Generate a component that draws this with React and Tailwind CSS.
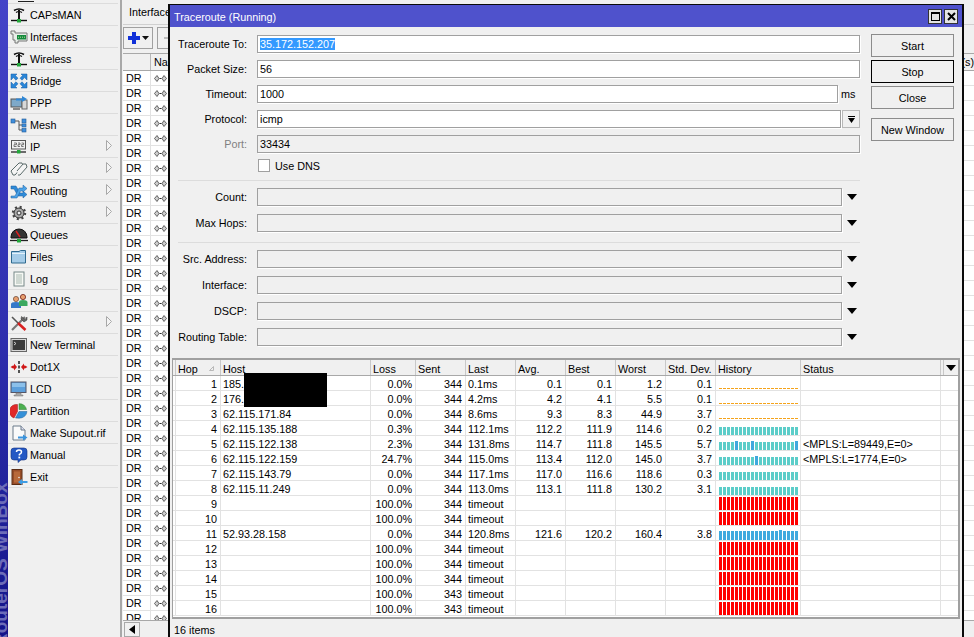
import React from "react";

const Base = ({ children, w = 18, h = 16 }) => (
  <svg width={w} height={h} viewBox="0 0 18 16" className="shrink-0">{children}</svg>
);

const Antenna = () => (
  <Base>
    <path d="M4 3.5Q9 .5 14 3.5" fill="none" stroke="#111" strokeWidth="1.6" />
    <path d="M6 5.5Q9 3.5 12 5.5" fill="none" stroke="#111" strokeWidth="1.2" />
    <path d="M9 3V13" stroke="#111" strokeWidth="2" />
    <path d="M1 13.5H17" stroke="#111" strokeWidth="1.4" />
    <rect x="7" y="12" width="4" height="3.5" fill="#22a83a" />
  </Base>
);
const Interfaces = () => (
  <Base>
    <path d="M1 2H5V4H17V12H8V14H5V11H3V5H1Z" fill="#e8eee8" stroke="#777" strokeWidth="1" />
    <rect x="7" y="6" width="9" height="4.5" fill="#168a3e" />
    <path d="M8 8.2H15" stroke="#b8e0a0" strokeWidth="1" strokeDasharray="1 1" />
  </Base>
);
const Bridge = () => (
  <Base>
    <g fill="#2a86d8" stroke="#185aa0" strokeWidth=".5">
      <path d="M1 1H7L5.4 2.6 8 5.2 6 7.2 3.4 4.6 1 7Z" />
      <path d="M17 1H11L12.6 2.6 10 5.2 12 7.2 14.6 4.6 17 7Z" />
      <path d="M1 15H7L5.4 13.4 8 10.8 6 8.8 3.4 11.4 1 9Z" />
      <path d="M17 15H11L12.6 13.4 10 10.8 12 8.8 14.6 11.4 17 9Z" />
    </g>
  </Base>
);
const Ppp = () => (
  <Base>
    <rect x="1" y="4" width="11" height="8" fill="#7ea9c9" stroke="#555" />
    <rect x="12" y="5" width="5" height="9" fill="#d8d8d8" stroke="#666" />
    <path d="M3 13H10V15H3Z" fill="#888" />
    <path d="M6 3.5H12V1L17 4 12 7V5.5H6Z" fill="#2f87d6" />
  </Base>
);
const Mesh = () => (
  <Base>
    <path d="M5 4H9V13H12M9 8H12" fill="none" stroke="#555" strokeWidth="1" />
    <rect x="1" y="2" width="4" height="4" fill="#3f8fdd" stroke="#245b95" strokeWidth=".6" />
    <rect x="12" y="2" width="4" height="4" fill="#3f8fdd" stroke="#245b95" strokeWidth=".6" />
    <rect x="12" y="7" width="4" height="3" fill="#3f8fdd" stroke="#245b95" strokeWidth=".6" />
    <rect x="12" y="11.5" width="4" height="3.5" fill="#3f8fdd" stroke="#245b95" strokeWidth=".6" />
  </Base>
);
const Ip = () => (
  <Base>
    <rect x="1.5" y="1.5" width="14" height="8.5" fill="#f2f2f2" stroke="#555" />
    <path d="M4 4H6.5V5.7H4V7.5H6.5M8 4H10V5.7H8V7.5H10M11.6 4H13.6V5.7H11.6V7.5H13.6" fill="none" stroke="#555" strokeWidth=".8" />
    <path d="M1 13H16" stroke="#222" strokeWidth="1.3" />
    <rect x="7" y="11" width="3.5" height="3.5" fill="#22a83a" />
  </Base>
);
const Mpls = () => (
  <Base>
    <path d="M1 10L9 2H12L13 5 5 14H3Z" fill="#f5f5f5" stroke="#5a6a6a" />
    <path d="M7 10L13 3H16L17 6 10 14H8" fill="#f5f5f5" stroke="#5a6a6a" />
  </Base>
);
const Routing = () => (
  <Base>
    <path d="M1 3H6L10 10H13V8L17 11.5 13 15V13H8L4 6H1Z" fill="#2e8ad8" stroke="#1c5c9c" strokeWidth=".5" />
    <path d="M1 13H5L9 5H13V2L17 5.5 13 9V8H10.5L7 15H1Z" fill="#4ba3e8" stroke="#1c5c9c" strokeWidth=".5" />
  </Base>
);
const Gear = () => (
  <Base>
    <circle cx="9" cy="8" r="5" fill="#aaa" stroke="#333" />
    <circle cx="9" cy="8" r="6" fill="none" stroke="#444" strokeWidth="2.4" strokeDasharray="2 2.7" />
    <circle cx="9" cy="8" r="2" fill="#f0f0f0" stroke="#333" />
  </Base>
);
const Queues = () => (
  <Base>
    <path d="M1 10A8 8 0 0 1 17 10V11H1Z" fill="#333" stroke="#111" />
    <path d="M6 4L10 10" stroke="#e02020" strokeWidth="1.4" />
    <path d="M0 13.5H18" stroke="#222" strokeWidth="1.3" />
    <rect x="7" y="12" width="4" height="3.5" fill="#22a83a" />
  </Base>
);
const Files = () => (
  <Base>
    <path d="M1.5 2.5H9L10.5 1.5H15.5V14H1.5Z" fill="#a5cce8" stroke="#2f6a8f" />
    <path d="M2 4.5H15" stroke="#e4f2fa" />
  </Base>
);
const Log = () => (
  <Base>
    <rect x="4" y="1" width="10" height="14" fill="#f6f8f4" stroke="#788" />
    <path d="M6 4H12M6 6H12M6 8H12M6 10H12M6 12H12" stroke="#a8b8b0" />
  </Base>
);
const Radius = () => (
  <Base>
    <circle cx="6" cy="6" r="2.6" fill="#e8a070" stroke="#503020" strokeWidth=".6" />
    <path d="M1 15V11Q1 9 6 9T11 11V15Z" fill="#3478c8" />
    <circle cx="13" cy="4" r="2.6" fill="#e8a070" stroke="#702018" strokeWidth=".8" />
    <path d="M9 13V9Q9 7 13 7T17.5 9V13Z" fill="#3aa860" />
  </Base>
);
const Tools = () => (
  <Base>
    <path d="M2 15L15 2" stroke="#777" strokeWidth="2.2" />
    <path d="M11.5 1.5L15 4.5 17 2 17 5 14 7 11 4Z" fill="#666" stroke="#333" strokeWidth=".5" />
    <path d="M2 2L8 8" stroke="#555" strokeWidth="1.6" />
    <path d="M8 8L15.5 15" stroke="#d82020" strokeWidth="2.6" />
  </Base>
);
const Terminal = () => (
  <Base>
    <rect x="1" y="1.5" width="15.5" height="13" fill="#d8d8d8" stroke="#666" />
    <rect x="2.5" y="3" width="12.5" height="10" fill="#3a3a3a" />
    <path d="M4 5L6 6.5 4 8" fill="none" stroke="#ddd" strokeWidth=".9" />
  </Base>
);
const Dot1x = () => (
  <Base>
    <path d="M9 2V5M9 6.5V9.5M9 11V14" stroke="#111" strokeWidth="1.4" />
    <path d="M7 8L4 4.5V6.5H3L0.5 8 3 9.5H4V11.5Z" fill="#d01818" />
    <path d="M11 8L14 4.5V6.5H15L17.5 8 15 9.5H14V11.5Z" fill="#d01818" />
  </Base>
);
const Lcd = () => (
  <Base>
    <rect x="1" y="1" width="15" height="10.5" fill="#5d9fdb" stroke="#556" />
    <path d="M2 2H15V6H2Z" fill="#8cc0ea" />
    <path d="M6 12H11V14H13V15H4V14H6Z" fill="#aaa" stroke="#777" strokeWidth=".5" />
  </Base>
);
const Partition = () => (
  <Base>
    <path d="M7.5 1.5A7 7 0 0 0 4 15L7.5 8.5Z" fill="#e02828" stroke="#981818" strokeWidth=".5" />
    <path d="M9 .7A7 7 0 0 1 16.5 6.5H9Z" fill="#4caf50" stroke="#2c7a30" strokeWidth=".5" />
    <path d="M9 8.5H17Q16 15 9 15.2 7 15 5.5 15Z" fill="#3490d8" stroke="#1f6098" strokeWidth=".5" />
  </Base>
);
const Supout = () => (
  <Base>
    <path d="M3 1H11L15 5V15H3Z" fill="#fafafa" stroke="#6a7a8a" />
    <path d="M11 1V5H15" fill="#dde" stroke="#6a7a8a" />
    <path d="M8 11.5H13V9.5L17.5 12.5 13 15.5V13.5H8Z" fill="#3a93dc" />
  </Base>
);
const Manual = () => (
  <Base>
    <path d="M4 1H14Q17 1 17 4V10Q17 13 14 13H11L8 15.5V13H4Q1 13 1 10V4Q1 1 4 1Z" fill="#2458c4" stroke="#123080" strokeWidth=".6" />
    <path d="M6.5 5Q6.5 3 9 3T11.5 5Q11.5 6.4 9.4 7.4V8.6" fill="none" stroke="#fff" strokeWidth="1.5" />
    <rect x="8.4" y="9.6" width="1.8" height="1.8" fill="#fff" />
  </Base>
);
const Exit = () => (
  <Base>
    <rect x="2" y="0.5" width="10" height="15" fill="#a0522d" stroke="#5a2c14" />
    <rect x="3.6" y="2" width="6.8" height="12" fill="#b8693a" stroke="#8a4522" strokeWidth=".6" />
    <circle cx="9" cy="8.5" r=".8" fill="#eee" />
    <path d="M17.5 12H12V10L8 13 12 16V14H17.5Z" fill="#3d9ce4" />
  </Base>
);

const menu = [
  ["CAPsMAN", Antenna], ["Interfaces", Interfaces], ["Wireless", Antenna], ["Bridge", Bridge],
  ["PPP", Ppp], ["Mesh", Mesh], ["IP", Ip, true], ["MPLS", Mpls, true], ["Routing", Routing, true],
  ["System", Gear, true], ["Queues", Queues], ["Files", Files], ["Log", Log], ["RADIUS", Radius],
  ["Tools", Tools, true], ["New Terminal", Terminal], ["Dot1X", Dot1x], ["LCD", Lcd],
  ["Partition", Partition], ["Make Supout.rif", Supout], ["Manual", Manual], ["Exit", Exit],
];

const Chevron = () => (
  <svg width="6" height="11" viewBox="0 0 6 11" className="absolute left-[98px] top-[4px]">
    <path d="M.5 .5L5.500 5.500 .5 10.500Z" fill="#f4f4f4" stroke="#a8a8a8" />
  </svg>
);

const Sidebar = () => (
  <div className="relative w-[8px] shrink-0 overflow-hidden bg-gradient-to-b from-[#4444c8] via-[#3030b0] to-[#14148a]">
    <span className="absolute left-[-9px] top-[647px] origin-top-left -rotate-90 whitespace-nowrap text-[19px] font-bold leading-[19px] text-[#6c6cb8]">
      RouterOS WinBox
    </span>
  </div>
);

const Menu = () => (
  <div className="w-[110px] shrink-0">
    <div className="h-[3px] overflow-hidden">
      <div className="ml-[10px] mt-[1px] h-[1px] w-[16px] bg-[#222]" />
    </div>
    <div className="border-t border-[#dcdcdc]">
      {menu.map(([label, Icon, sub]) => (
        <div key={label} className="relative flex h-[22px] items-center gap-[2px] border-b border-[#dcdcdc] pl-[2px]">
          <Icon />
          <span className="whitespace-nowrap pt-[2px]">{label}</span>
          {sub && <Chevron />}
        </div>
      ))}
    </div>
  </div>
);

const NameGlyph = () => (
  <svg width="13" height="7" viewBox="0 0 13 7" className="shrink-0">
    <path d="M3 .5L.5 3.500 3 6.500 5 3.500ZM10 .5L12.500 3.500 10 6.500 8 3.500Z" fill="#cfcfcf" stroke="#444" strokeWidth=".8" />
    <path d="M5.500 3.500H7.500" stroke="#333" />
  </svg>
);

const BackgroundList = () => {
  const rows = Array.from({ length: 37 });
  return (
    <div className="flex min-w-0 flex-1 flex-col border-l-2 border-[#a8a8a8] pl-[1px]">
      <div className="flex h-[25px] shrink-0 items-start border-b border-[#d0d0d0]">
        <span className="ml-[6px] mt-[7px] whitespace-nowrap">Interface</span>
      </div>
      <div className="flex h-[28px] shrink-0 items-start gap-[4px] pt-[2px]">
        <div className="flex h-[22px] w-[30px] items-center justify-center gap-[2px] border border-[#a0a0a0]">
          <svg width="12" height="12" viewBox="0 0 12 12"><path d="M4 0H8V4H12V8H8V12H4V8H0V4H4Z" fill="#1030d8" /></svg>
          <svg width="7" height="4" viewBox="0 0 7 4"><path d="M0 0H7L3.500 4Z" fill="#111" /></svg>
        </div>
        <div className="flex h-[22px] w-[20px] items-center justify-center border border-[#a0a0a0]">
          <div className="h-[2px] w-[6px] bg-[#bbb]" />
        </div>
      </div>
      <div className="flex h-[18px] shrink-0 border-y border-[#a8a8a8] leading-[17px]">
        <div className="w-[28px] border-r border-[#b8b8b8]" />
        <div className="pl-[3px]">Name</div>
        <div className="flex-1 overflow-hidden whitespace-nowrap text-right">(s)</div>
      </div>
      <div className="min-h-0 flex-1 overflow-hidden bg-white">
        {rows.map((_, i) => (
          <div key={i} className="flex h-[15px] border-b border-[#e2e2e2]">
            <div className="w-[28px] border-r border-[#e2e2e2] pl-[3px] leading-[15px]">DR</div>
            <div className="flex items-center pl-[3px]"><NameGlyph /></div>
          </div>
        ))}
      </div>
      <div className="flex h-[17px] shrink-0 border-t border-[#a8a8a8] p-[1px]">
        <div className="flex h-[15px] w-[16px] items-center justify-center border border-[#a8a8a8]">
          <svg width="6" height="9" viewBox="0 0 6 9"><path d="M6 0V9L0 4.500Z" fill="#000" /></svg>
        </div>
      </div>
    </div>
  );
};

const Field = ({ label, value, selected, disabled, dim, after }) => (
  <div className="flex h-[18px] items-center">
    <div className={`w-[77px] whitespace-nowrap text-right ${dim ? "text-[#808080]" : ""}`}>{label}</div>
    <div className={`ml-[10px] flex h-[18px] flex-1 items-center overflow-hidden border border-[#a0a0a0] pl-[2px] shadow-[1px_1px_0_#fff] ${disabled ? "bg-[#f0f0f0]" : "bg-white"}`}>
      {selected ? <span className="bg-[#3399ff] py-[1px] text-white">{value}</span> : value}
    </div>
    {after}
  </div>
);

const DropArrow = () => (
  <div className="flex w-[18px] shrink-0 justify-center pl-[1px]">
    <svg width="10" height="6" viewBox="0 0 10 6"><path d="M0 0H10L5 6Z" fill="#000" /></svg>
  </div>
);

const Button = ({ children, active, className = "" }) => (
  <div className={`flex h-[23px] w-[83px] items-center justify-center border pt-[1px] ${active ? "border-black" : "border-[#8c8c8c]"} ${className}`}>
    {children}
  </div>
);

const Divider = ({ className }) => <div className={`ml-[8px] h-[1px] bg-[#dcdcdc] ${className}`} />;

const Form = () => (
  <div className="flex pr-[8px]">
    <div className="w-[690px] shrink-0 pt-[8px]">
      <Field label="Traceroute To:" value="35.172.152.207" selected />
      <div className="mt-[7px]"><Field label="Packet Size:" value="56" /></div>
      <div className="mt-[7px]">
        <Field label="Timeout:" value="1000" after={<span className="w-[22px] shrink-0 pl-[3px]">ms</span>} />
      </div>
      <div className="mt-[7px]">
        <Field label="Protocol:" value="icmp" after={
          <div className="ml-[1px] flex h-[18px] w-[18px] shrink-0 items-center justify-center border border-[#b8b8b8]">
            <svg width="7" height="7" viewBox="0 0 7 7"><path d="M0 0H7V1H0ZM0 2H7L3.500 7Z" fill="#000" /></svg>
          </div>
        } />
      </div>
      <div className="mt-[7px]"><Field label="Port:" value="33434" disabled dim /></div>
      <div className="mt-[6px] flex h-[13px] items-center pl-[88px]">
        <div className="h-[13px] w-[12px] border border-[#a0a0a0] bg-white" />
        <span className="ml-[5px] pt-[1px]">Use DNS</span>
      </div>
      <Divider className="mt-[8px]" />
      <div className="mt-[7px]"><Field label="Count:" disabled after={<DropArrow />} /></div>
      <div className="mt-[8px]"><Field label="Max Hops:" disabled after={<DropArrow />} /></div>
      <Divider className="mt-[10px]" />
      <div className="mt-[7px]"><Field label="Src. Address:" disabled after={<DropArrow />} /></div>
      <div className="mt-[8px]"><Field label="Interface:" disabled after={<DropArrow />} /></div>
      <div className="mt-[8px]"><Field label="DSCP:" disabled after={<DropArrow />} /></div>
      <div className="mt-[8px]"><Field label="Routing Table:" disabled after={<DropArrow />} /></div>
    </div>
    <div className="ml-[11px] flex flex-col pt-[7px]">
      <Button>Start</Button>
      <Button active className="mt-[3px]">Stop</Button>
      <Button className="mt-[3px]">Close</Button>
      <Button className="mt-[9px]">New Window</Button>
    </div>
  </div>
);

const W = {
  gut: "w-[3px]", hop: "w-[45px]", host: "w-[150px]", loss: "w-[45px]", sent: "w-[50px]", last: "w-[50px]",
  avg: "w-[50px]", best: "w-[50px]", worst: "w-[50px]", std: "w-[50px]", hist: "w-[85px]", status: "w-[140px]",
};

const data = [
  ["1", "185.", "0.0%", "344", "0.1ms", "0.1", "0.1", "1.2", "0.1", "o", ""],
  ["2", "176.", "0.0%", "344", "4.2ms", "4.2", "4.1", "5.5", "0.1", "o", ""],
  ["3", "62.115.171.84", "0.0%", "344", "8.6ms", "9.3", "8.3", "44.9", "3.7", "o", ""],
  ["4", "62.115.135.188", "0.3%", "344", "112.1ms", "112.2", "111.9", "114.6", "0.2", "t", ""],
  ["5", "62.115.122.138", "2.3%", "344", "131.8ms", "114.7", "111.8", "145.5", "5.7", "t", "<MPLS:L=89449,E=0>", [4, 8, 19]],
  ["6", "62.115.122.159", "24.7%", "344", "115.0ms", "113.4", "112.0", "145.0", "3.7", "t", "<MPLS:L=1774,E=0>", [9]],
  ["7", "62.115.143.79", "0.0%", "344", "117.1ms", "117.0", "116.6", "118.6", "0.3", "t", ""],
  ["8", "62.115.11.249", "0.0%", "344", "113.0ms", "113.1", "111.8", "130.2", "3.1", "t", ""],
  ["9", "", "100.0%", "344", "timeout", "", "", "", "", "r", ""],
  ["10", "", "100.0%", "344", "timeout", "", "", "", "", "r", ""],
  ["11", "52.93.28.158", "0.0%", "344", "120.8ms", "121.6", "120.2", "160.4", "3.8", "b", "", [15]],
  ["12", "", "100.0%", "344", "timeout", "", "", "", "", "r", ""],
  ["13", "", "100.0%", "344", "timeout", "", "", "", "", "r", ""],
  ["14", "", "100.0%", "344", "timeout", "", "", "", "", "r", ""],
  ["15", "", "100.0%", "343", "timeout", "", "", "", "", "r", ""],
  ["16", "", "100.0%", "343", "timeout", "", "", "", "", "r", ""],
];

const History = ({ kind, tall = [] }) => {
  const bars = Array.from({ length: 20 });
  return (
    <div className={`ml-[3px] flex h-full items-end gap-[1px] ${kind === "o" ? "pb-[1px]" : ""}`}>
      {bars.map((_, i) => {
        const up = tall.includes(i);
        let cls = "h-[13px] bg-[#ff0000]";
        if (kind === "o") cls = "h-[1px] bg-[#f5a31a]";
        if (kind === "t") cls = up ? "h-[9px] bg-[#3fa9de]" : "h-[8px] bg-[#5ccdc9]";
        if (kind === "b") cls = up ? "h-[10px] bg-[#3fa9de]" : "h-[9px] bg-[#3fa9de]";
        return <div key={i} className={`w-[3px] ${cls}`} />;
      })}
    </div>
  );
};

const cellB = "h-full shrink-0 overflow-hidden whitespace-nowrap border-r border-[#e2e2e2]";

const TraceTable = () => (
  <div className="ml-[2px] mt-[12px] flex h-[261px] w-[788px] flex-col border-t-2 border-r-2 border-b-2 border-l border-[#a0a0a0] bg-white">
    <div className="flex h-[16px] shrink-0 border-b border-[#a8a8a8] bg-[#f0f0f0]">
      <div className={`${W.gut} shrink-0 border-r border-[#c8c8c8]`} />
      {[["Hop", W.hop], ["Host", W.host], ["Loss", W.loss], ["Sent", W.sent], ["Last", W.last], ["Avg.", W.avg], ["Best", W.best], ["Worst", W.worst], ["Std. Dev.", W.std], ["History", W.hist], ["Status", W.status]].map(([t, w]) => (
        <div key={t} className={`${w} relative shrink-0 whitespace-nowrap border-r border-[#c8c8c8] pl-[2px] leading-[18px]`}>
          {t}
          {t === "Hop" && (
            <svg width="5" height="5" viewBox="0 0 5 5" className="absolute right-[6px] top-[6px]"><path d="M4.500 .5V4.500H.5Z" fill="none" stroke="#b8b8b8" /></svg>
          )}
        </div>
      ))}
      <div className="ml-[2px] flex flex-1 items-center justify-center border-l border-[#c8c8c8]">
        <svg width="10" height="6" viewBox="0 0 10 6"><path d="M0 0H10L5 6Z" fill="#000" /></svg>
      </div>
    </div>
    <div className="relative flex-1">
      {data.map((r) => (
        <div key={r[0]} className="flex h-[15px] border-b border-[#e2e2e2] leading-[16px]">
          <div className={`${W.gut} ${cellB}`} />
          <div className={`${W.hop} ${cellB} pr-[3px] text-right`}>{r[0]}</div>
          <div className={`${W.host} ${cellB} pl-[2px]`}>{r[1]}</div>
          <div className={`${W.loss} ${cellB} pr-[3px] text-right`}>{r[2]}</div>
          <div className={`${W.sent} ${cellB} pr-[3px] text-right`}>{r[3]}</div>
          <div className={`${W.last} ${cellB} pl-[2px]`}>{r[4]}</div>
          <div className={`${W.avg} ${cellB} pr-[3px] text-right`}>{r[5]}</div>
          <div className={`${W.best} ${cellB} pr-[3px] text-right`}>{r[6]}</div>
          <div className={`${W.worst} ${cellB} pr-[3px] text-right`}>{r[7]}</div>
          <div className={`${W.std} ${cellB} pr-[3px] text-right`}>{r[8]}</div>
          <div className={`${W.hist} ${cellB}`}><History kind={r[9]} tall={r[11]} /></div>
          <div className={`${W.status} ${cellB} pl-[2px]`}>{r[10]}</div>
        </div>
      ))}
      <div className="absolute left-[71px] top-[-3px] h-[34px] w-[83px] bg-black" />
    </div>
  </div>
);

const TraceWindow = () => (
  <div className="absolute left-[168px] top-[4px] flex h-[640px] w-[796px] flex-col border-x-2 border-t border-[#0a0a0a] bg-[#f0f0f0]">
    <div className="flex h-[22px] shrink-0 items-center justify-between bg-[#4f52cc] pl-[4px] pr-[4px] text-white">
      <span className="whitespace-nowrap pt-[2px]">Traceroute (Running)</span>
      <div className="flex gap-[2px]">
        <div className="flex h-[15px] w-[14px] items-center justify-center border border-[#333] bg-[#e4e4e4]">
          <div className="h-[9px] w-[9px] border border-t-2 border-black" />
        </div>
        <div className="flex h-[15px] w-[14px] items-center justify-center border border-[#333] bg-[#e4e4e4]">
          <svg width="9" height="9" viewBox="0 0 9 9"><path d="M1 1L8 8M8 1L1 8" stroke="#000" strokeWidth="2" /></svg>
        </div>
      </div>
    </div>
    <Form />
    <TraceTable />
    <div className="ml-[2px] h-[17px] pl-[2px] leading-[22px]">16 items</div>
  </div>
);

export default function App() {
  return (
    <div className="relative flex h-[637px] w-[974px] overflow-hidden bg-[#f0f0f0] font-['Liberation_Sans',sans-serif] text-[10.8px] leading-none text-black">
      <Sidebar />
      <Menu />
      <div className="w-[2px] shrink-0" />
      <BackgroundList />
      <TraceWindow />
    </div>
  );
}
